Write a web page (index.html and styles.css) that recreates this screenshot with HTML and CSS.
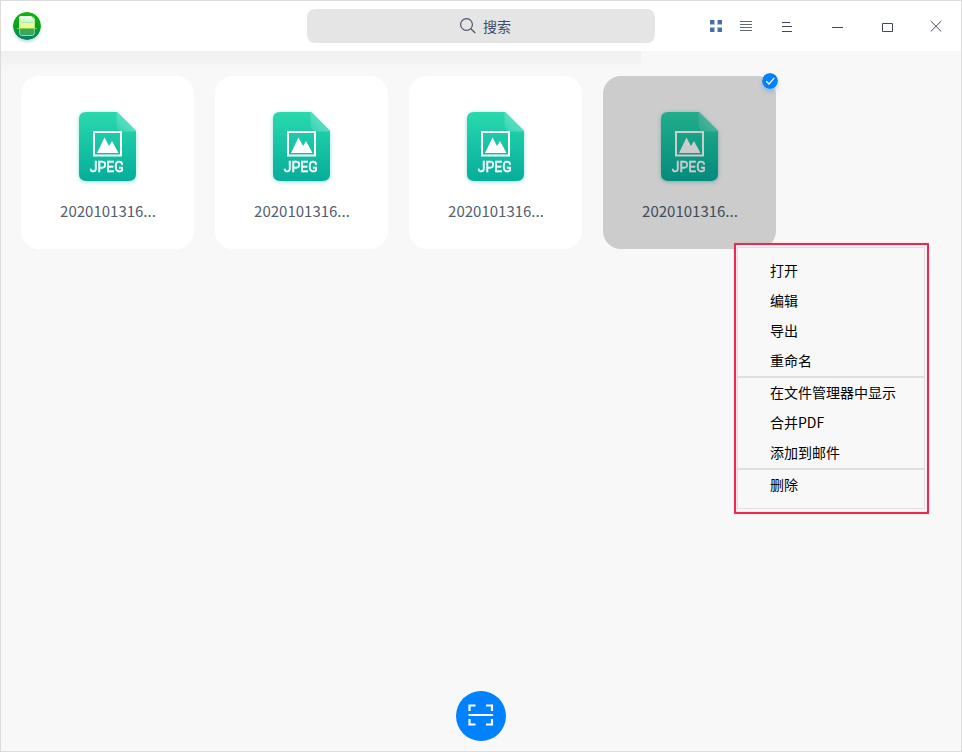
FILE: index.html
```
<!DOCTYPE html>
<html lang="zh-CN">
<head>
<meta charset="utf-8">
<title>扫描管理</title>
<link rel="stylesheet" href="styles.css">
</head>
<body>
<svg class="defs" width="0" height="0" aria-hidden="true">
  <defs>
    <linearGradient id="page" x1="0" y1="0" x2="0" y2="1"><stop offset="0" stop-color="#29d9ae"/><stop offset="1" stop-color="#05ad9b"/></linearGradient>
    <linearGradient id="fold" x1="0" y1="1" x2="1" y2="0"><stop offset="0" stop-color="#2fd3b2"/><stop offset=".45" stop-color="#55dcbf"/><stop offset="1" stop-color="#4bdcba"/></linearGradient>
    <linearGradient id="logo" x1="0" y1="0" x2="0" y2="1"><stop offset="0" stop-color="#0db60c"/><stop offset=".5" stop-color="#08a51b"/><stop offset="1" stop-color="#087d75"/></linearGradient>
    <linearGradient id="sheet" x1="0" y1="0" x2="0" y2="1"><stop offset="0" stop-color="#f6fff0"/><stop offset=".4" stop-color="#d5f8c5"/><stop offset=".7" stop-color="#eafa90"/><stop offset="1" stop-color="#f0fa90"/></linearGradient>
    <symbol id="jpeg" viewBox="0 0 57 70">
      <path fill="url(#page)" d="M7 0H38L57 19V62Q57 69 49.500 69H7.500Q0 69 0 62V7Q0 0 7 0Z"/>
      <path fill="url(#fold)" d="M37.500 0L57 19.500H45Q37.500 19.500 37.500 12Z"/>
      <path fill="none" stroke="#fff" stroke-width="2" d="M15 20H42V43.500H15Z"/>
      <path fill="#fff" d="M18 41L25.500 25.500L30 34L33 29L39.500 41Z"/>
      <text class="format" x="27.800" y="60" text-anchor="middle" textLength="34" lengthAdjust="spacingAndGlyphs">JPEG</text>
    </symbol>
  </defs>
</svg>
<div class="window">
  <header class="titlebar">
    <svg class="logo" width="28" height="28" viewBox="0 0 28 28">
      <circle cx="14" cy="14" r="14" fill="url(#logo)"/>
      <rect x="6.700" y="5" width="14.600" height="18.500" rx="2" fill="#3ba75a" stroke="#93da9b"/>
      <path d="M6 5.500Q6 4 8 4H18L21.500 7.500V16H6Z" fill="url(#sheet)"/>
      <path d="M8 10.500H20" stroke="#a8eab6" stroke-width="1"/>
      <path d="M4 16.500H24" stroke="#a5e84f" stroke-opacity=".7" stroke-width="1"/>
    </svg>
    <div class="search">
      <svg width="16" height="16" viewBox="0 0 16 16" fill="none" stroke="#4d5668" stroke-width="1.200"><circle cx="6.500" cy="6.500" r="5.900"/><path d="M10.800 10.800L15.300 15"/></svg>
      <span>搜索</span>
    </div>
    <nav class="tools">
      <svg width="12" height="12" viewBox="0 0 12 12" shape-rendering="crispEdges"><path fill="#a9bfdc" d="M0 0H5V5H0ZM7 0H12V5H7ZM0 7H5V12H0ZM7 7H12V12H7Z"/><path fill="#4470aa" d="M0 0H4V4H0ZM8 0H12V4H8ZM0 8H4V12H0ZM8 8H12V12H8Z"/></svg>
      <svg class="list" width="12" height="12" viewBox="0 0 12 12" shape-rendering="crispEdges"><path fill="#606980" d="M0 1H12V2H0ZM0 4H12V5H0ZM0 7H12V8H0ZM0 10H12V11H0Z"/></svg>
      <svg class="menu-icon" width="10" height="12" viewBox="0 0 10 12" shape-rendering="crispEdges"><path fill="#41465d" d="M0 2H8V3H0ZM0 6H10V7H0ZM0 11H10V12H0Z"/></svg>
      <svg class="minimize" width="11" height="12" viewBox="0 0 11 12" shape-rendering="crispEdges"><path fill="#41465d" d="M0 7H11V8H0Z"/></svg>
      <svg class="maximize" width="11" height="12" viewBox="0 0 11 12"><path fill="none" stroke="#41465d" d="M.5 3.500H10.500V11.500H.5Z"/></svg>
      <svg class="close" width="12" height="12" viewBox="0 0 12 12"><path fill="none" stroke="#41465d" d="M.7 1L11.300 11.600M11.300 1L.7 11.600"/></svg>
    </nav>
  </header>
  <main class="content">
    <div class="grid">
      <article class="card"><svg class="file" width="57" height="70"><use href="#jpeg"/></svg><p>2020101316...</p></article>
      <article class="card"><svg class="file" width="57" height="70"><use href="#jpeg"/></svg><p>2020101316...</p></article>
      <article class="card"><svg class="file" width="57" height="70"><use href="#jpeg"/></svg><p>2020101316...</p></article>
      <article class="card selected"><svg class="file" width="57" height="70"><use href="#jpeg"/></svg><p>2020101316...</p>
        <svg class="check" width="16" height="16" viewBox="0 0 16 16"><circle cx="8" cy="8" r="8" fill="#0081ff"/><path fill="none" stroke="#fff" stroke-width="1.300" d="M4.200 8.200L7 11L12.300 4.800"/></svg>
      </article>
    </div>
    <button class="scan" aria-label="扫描">
      <svg width="26" height="24" viewBox="0 0 26 24" fill="none" stroke="#fff" stroke-width="2.200"><path d="M1.500 7V1.500H7.500M18 1.500H24V7M24 15V20.500H18M7.500 20.500H1.500V15"/><path d="M1.300 11H24.200" stroke-linecap="round"/></svg>
    </button>
  </main>
  <div class="menu">
    <ul>
      <li>打开</li><li>编辑</li><li>导出</li><li>重命名</li>
      <li class="group">在文件管理器中显示</li><li>合并PDF</li><li>添加到邮件</li>
      <li class="group">删除</li>
    </ul>
  </div>
</div>
</body>
</html>
```
FILE: styles.css
```
* { box-sizing: border-box; }
body { margin: 0; font-family: "Noto Sans CJK SC", "Noto Sans", sans-serif; }
.defs { position: absolute; }
.window {
  position: relative;
  display: flex;
  flex-direction: column;
  width: 962px;
  height: 752px;
  border: 1px solid #dcdcdc;
  background: #f8f8f8;
  overflow: hidden;
}
.titlebar {
  display: grid;
  grid-template-columns: 306px 348px 1fr;
  align-items: center;
  height: 50px;
  background: #fff;
}
.logo { margin-left: 12px; border-radius: 50%; box-shadow: 0 2px 3px #087d7540; }
.search {
  display: flex;
  align-items: center;
  justify-content: center;
  gap: 7px;
  height: 34px;
  padding-left: 9px;
  border-radius: 8px;
  background: #e5e5e5;
  color: #414d68;
  font-size: 14px;
}
.search span { line-height: 20px; }
.tools { display: flex; align-items: center; padding-left: 55px; }
.list { margin-left: 18px; }
.menu-icon { margin-left: 30px; }
.minimize { margin-left: 40px; }
.maximize { margin-left: 39px; }
.close { margin-left: 37px; }
.content {
  flex: 1;
  display: flex;
  flex-direction: column;
  justify-content: space-between;
  padding: 25px 20px 10px;
  background: linear-gradient(#efefef, #f8f8f8) 0 0 / 640px 20px no-repeat;
}
.grid { display: grid; grid-template-columns: repeat(4, 173px); gap: 21px; }
.card {
  position: relative;
  display: flex;
  flex-direction: column;
  align-items: center;
  height: 173px;
  padding-top: 36px;
  border-radius: 18px;
  background: #fff;
}
.file { overflow: visible; filter: drop-shadow(0 1px 2px #05ad9b66); }
.format { font: 14.8px Roboto, sans-serif; fill: #fff; stroke: #fff; stroke-width: .5px; }
.card p { margin: 18px 0 0 1px; font-size: 15px; line-height: 22px; color: #526070; }
.selected { background: #ccc; }
.selected .file { filter: brightness(.8) drop-shadow(0 1px 2px #05786b66); }
.selected p { color: #424d5a; }
.check { position: absolute; top: -3px; right: -2px; border-radius: 50%; box-shadow: 0 3px 4px #0081ff40; }
.scan {
  display: grid;
  place-items: center;
  align-self: center;
  width: 50px;
  height: 50px;
  padding: 0;
  border: 0;
  border-radius: 50%;
  background: #0081ff;
}
.menu {
  position: absolute;
  left: 733px;
  top: 242px;
  width: 195px;
  height: 271px;
  padding: 2px 2px 3px 1px;
  border: 2px solid #e62b55;
  border-radius: 1px;
  background: #f8f8f8;
  box-shadow: 0 0 1px #e62b5599, inset 0 0 1px #e62b5599;
}
.menu ul {
  height: 262px;
  margin: 0;
  padding: 8px 0 0;
  border: 1px solid #e0e0e0;
  list-style: none;
}
.menu li { height: 30px; padding-left: 32px; font-size: 14px; line-height: 28px; color: #000; }
.menu .group { height: 32px; border-top: 2px solid #dfdfdf; }
```
